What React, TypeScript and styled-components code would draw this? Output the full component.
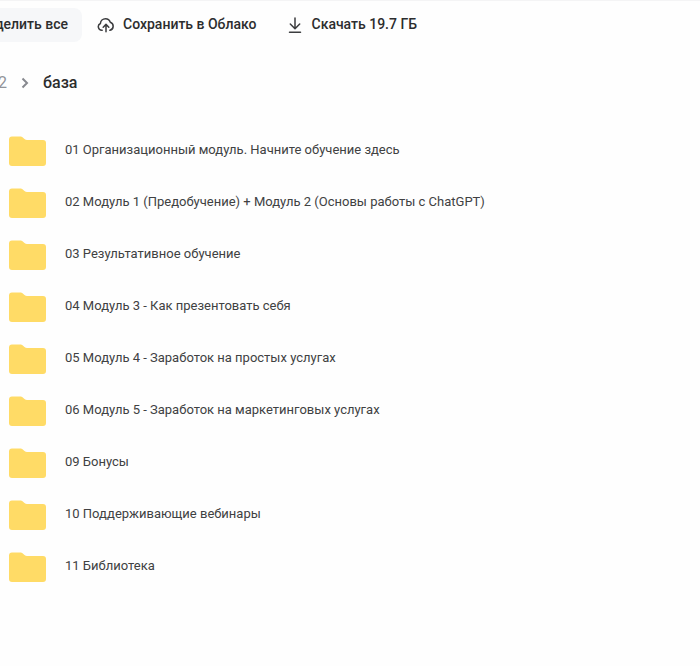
import React from "react";
import styled, { createGlobalStyle } from "styled-components";

const GlobalStyle = createGlobalStyle`
  * { box-sizing: border-box; }
  body {
    margin: 0;
    background: #fefefe;
    color: #2c2d2e;
    font-family: Roboto, "Liberation Sans", sans-serif;
    overflow-x: hidden;
  }
`;

const Page = styled.main`
  border-top: 1px solid #f4f4f5;
  min-height: 100vh;
`;

const Toolbar = styled.div`
  display: flex;
  align-items: center;
  gap: 1px;
  padding-top: 7px;
`;

const SelectSlot = styled.div`
  display: flex;
  justify-content: flex-end;
  width: 82px;
  overflow: hidden;
`;

const ToolButton = styled.button<{ $filled?: boolean }>`
  display: flex;
  align-items: center;
  flex: none;
  gap: 8px;
  height: 34px;
  padding: 0 14px 2px;
  border: 0;
  border-radius: 8px;
  background: ${(p) => (p.$filled ? "#f6f7f9" : "transparent")};
  color: #2c2d2e;
  font: 500 14px/20px Roboto, "Liberation Sans", sans-serif;
  white-space: nowrap;
  cursor: pointer;
`;

const ToolIcon = styled.svg`
  width: 18px;
  height: 18px;
  flex: none;
  margin-top: 2px;
  fill: none;
  stroke: #3c3d3f;
  stroke-width: 1.5;
  stroke-linecap: round;
  stroke-linejoin: round;
`;

const Breadcrumbs = styled.nav`
  display: flex;
  align-items: center;
  height: 24px;
  margin-top: 29px;
  font-size: 16px;
  line-height: 24px;
`;

const ParentSlot = styled.div`
  display: flex;
  justify-content: flex-end;
  width: 7px;
  overflow: hidden;
`;

const ParentLink = styled.a`
  color: #919399;
  text-decoration: none;
  white-space: nowrap;
`;

const Chevron = styled.svg`
  width: 8px;
  height: 12px;
  margin: 0 14px;
  fill: none;
  stroke: #87898f;
  stroke-width: 2;
`;

const Current = styled.span`
  font-weight: 500;
`;

const FolderList = styled.ul`
  margin: 29px 0 0;
  padding: 0;
  list-style: none;
`;

const FolderRow = styled.li`
  height: 52px;
  padding-left: 9px;
`;

const FolderLink = styled.a`
  display: flex;
  align-items: center;
  gap: 19px;
  height: 52px;
  color: #404142;
  font-size: 13px;
  line-height: 20px;
  text-decoration: none;
`;

const FolderIcon = styled.svg`
  width: 37px;
  height: 30px;
  flex: none;
  margin-top: 2px;
  fill: #ffdb66;
`;

const folders = [
  "01 Организационный модуль. Начните обучение здесь",
  "02 Модуль 1 (Предобучение) + Модуль 2 (Основы работы с ChatGPT)",
  "03 Результативное обучение",
  "04 Модуль 3 - Как презентовать себя",
  "05 Модуль 4 - Заработок на простых услугах",
  "06 Модуль 5 - Заработок на маркетинговых услугах",
  "09 Бонусы",
  "10 Поддерживающие вебинары",
  "11 Библиотека",
];

export default function App() {
  return (
    <Page>
      <GlobalStyle />
      <Toolbar>
        <SelectSlot>
          <ToolButton $filled>Выделить все</ToolButton>
        </SelectSlot>
        <ToolButton>
          <ToolIcon viewBox="0 0 18 18" aria-hidden="true">
            <path d="M5.2 14.2H4.8A3.5 3.5 0 0 1 3.4 7.5C3.6 4.8 5.8 2.8 8.5 2.8c2.3 0 4.1 1.4 4.8 3.5A4.1 4.1 0 0 1 13 14.2h-.2M9 15.8V8.6M6.2 11.2 9 8.4l2.8 2.8" />
          </ToolIcon>
          Сохранить в Облако
        </ToolButton>
        <ToolButton>
          <ToolIcon viewBox="0 0 18 18" aria-hidden="true">
            <path d="M9 2v10.5M4.3 8 9 12.7 13.7 8M3.5 16.3h11" />
          </ToolIcon>
          Скачать 19.7 ГБ
        </ToolButton>
      </Toolbar>
      <Breadcrumbs aria-label="Путь">
        <ParentSlot>
          <ParentLink href="#">2</ParentLink>
        </ParentSlot>
        <Chevron viewBox="0 0 8 12" aria-hidden="true">
          <path d="m1.5 1.5 4.5 4.5-4.5 4.5" />
        </Chevron>
        <Current aria-current="page">база</Current>
      </Breadcrumbs>
      <FolderList>
        {folders.map((name) => (
          <FolderRow key={name}>
            <FolderLink href="#">
              <FolderIcon viewBox="0 0 37 30" aria-hidden="true">
                <path d="M3 .5h8c1.2 0 2 .3 2.8 1l1.7 1.5c.8.7 1.5 1 2.5 1h16c2 0 3 1 3 3V27c0 2-1 3-3 3H3c-2 0-3-1-3-3V3.5c0-2 1-3 3-3Z" />
              </FolderIcon>
              {name}
            </FolderLink>
          </FolderRow>
        ))}
      </FolderList>
    </Page>
  );
}
